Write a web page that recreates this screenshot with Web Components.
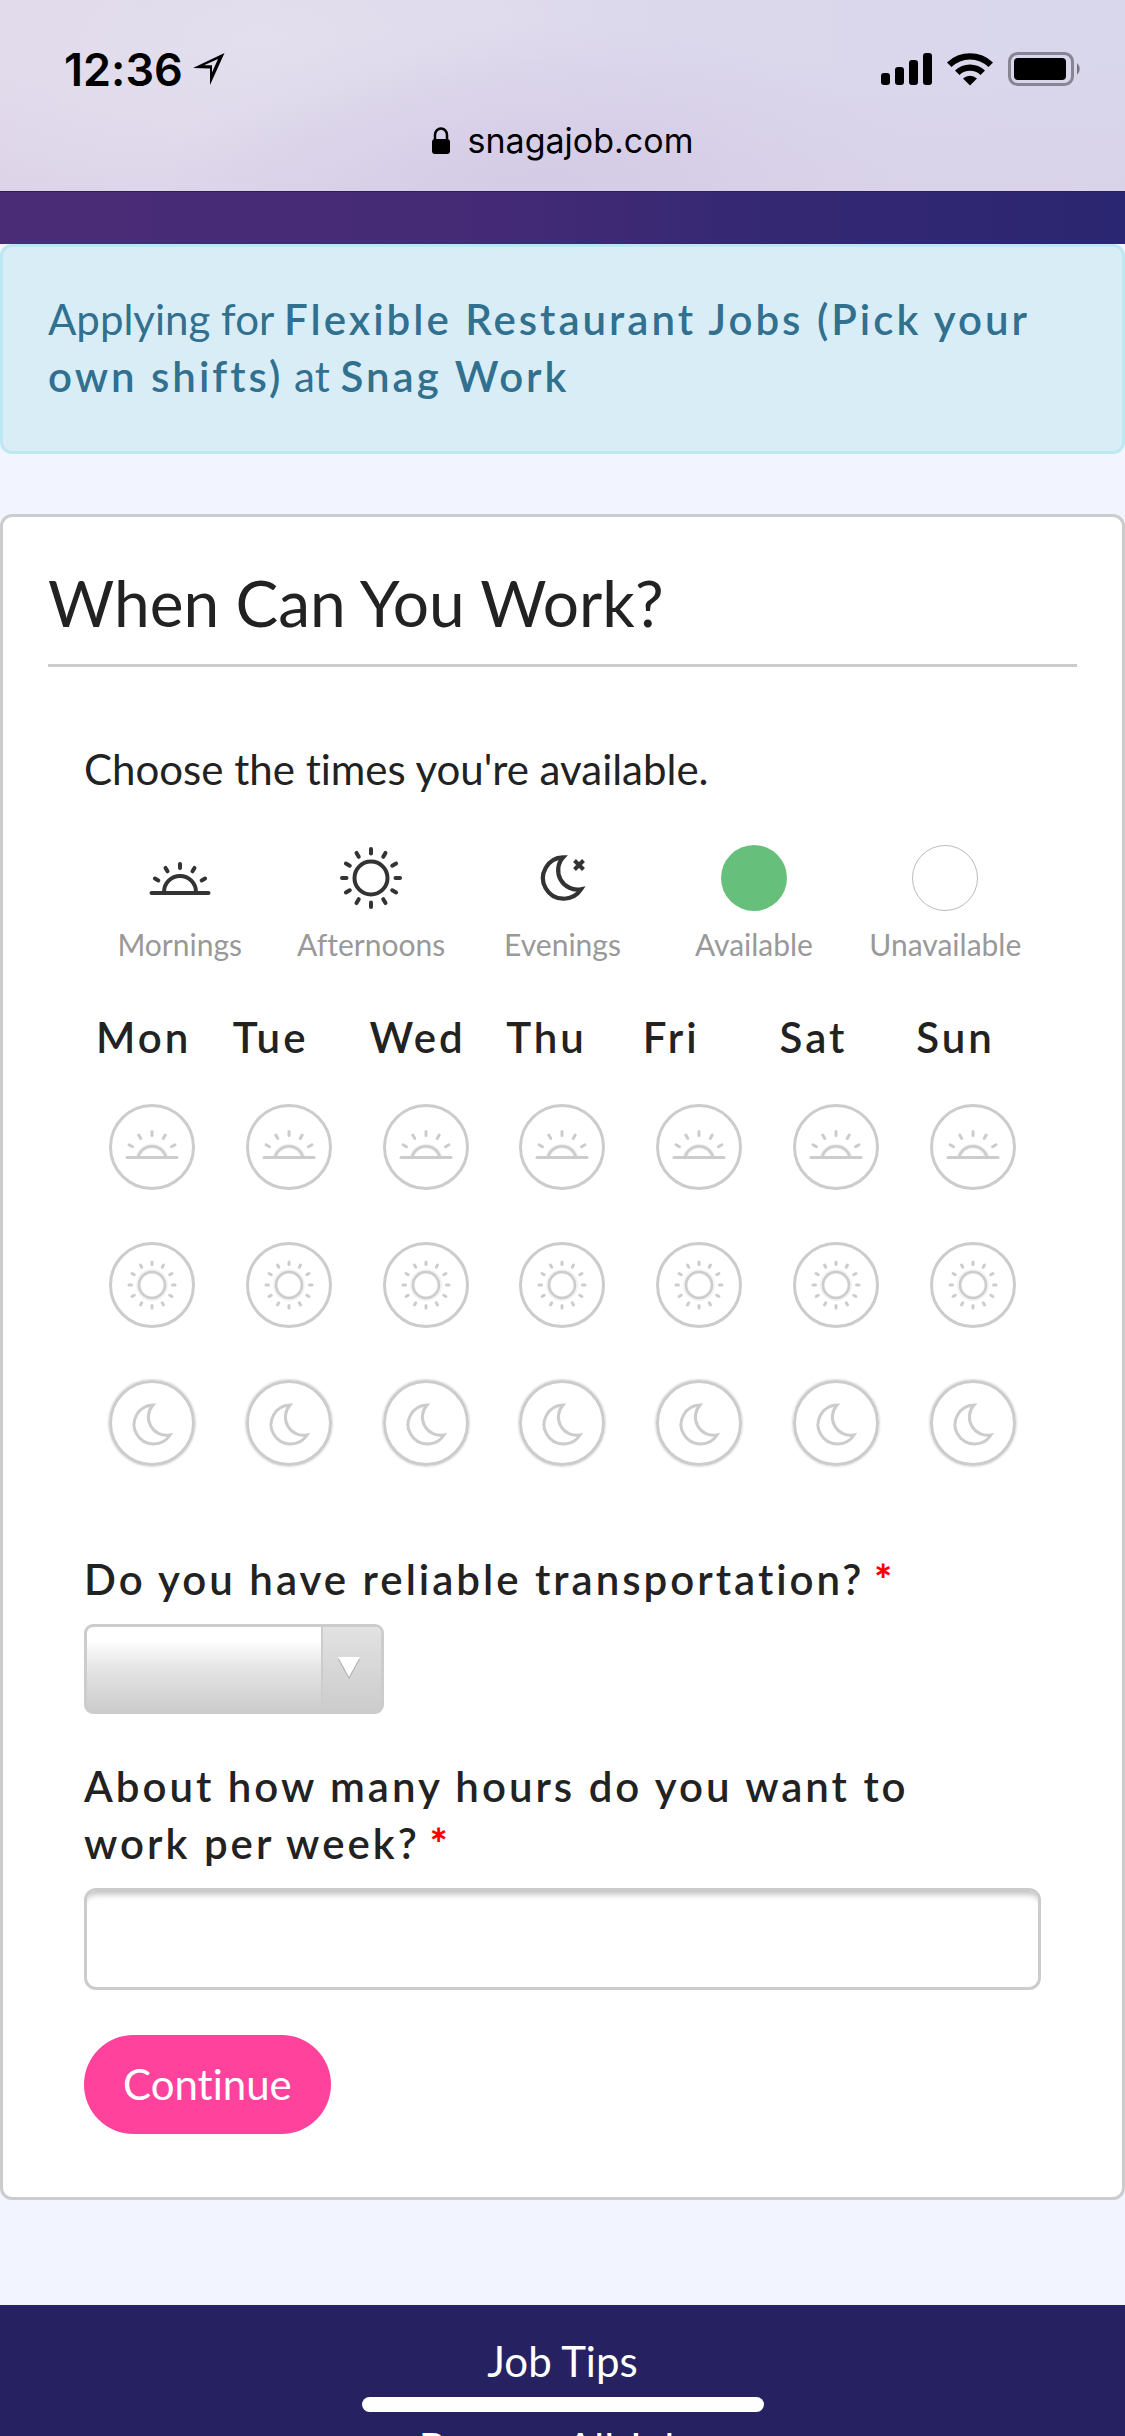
<!DOCTYPE html>
<html lang="en">
<head>
<meta charset="utf-8">
<meta name="viewport" content="width=device-width, initial-scale=1">
<title>When Can You Work?</title>
<style>
  body { margin: 0; background: #f2f4ff; color: #222; font: 400 42px/57px Lato, "Open Sans", sans-serif; font-variant-ligatures: none; }
</style>
</head>
<body>
<job-app>
  <status-bar slot="chrome" time="12:36" host="snagajob.com"></status-bar>
  <apply-banner>Applying for <b>Flexible Restaurant Jobs (Pick your own shifts)</b> at <b>Snag Work</b></apply-banner>
  <form-card heading="When Can You Work?">
    <p>Choose the times you're available.</p>
    <availability-legend></availability-legend>
    <availability-grid></availability-grid>
    <select-field label="Do you have reliable transportation?"></select-field>
    <text-field label="About how many hours do you want to work per week?"></text-field>
    <pill-button>Continue</pill-button>
  </form-card>
  <site-footer></site-footer>
</job-app>

<script>
const define = (name, render) => customElements.define(name, class extends HTMLElement {
  connectedCallback() {
    if (this.shadowRoot) return;
    this.attachShadow({ mode: 'open' }).innerHTML = render(this);
  }
});

const rays = (angles, from, to, cy = 0) => angles.map(a =>
  `<line x1="0" y1="${-from}" x2="0" y2="${-to}" transform="translate(0 ${cy}) rotate(${a})"/>`).join('');
const around = Array.from({ length: 12 }, (_, i) => i * 30);
const moonPath = 'M1 -18A19.5 19.5 0 1 0 18 12A18.2 18.2 0 0 1 1 -18Z';

/* Icons share a 90 unit box with the origin in its centre. */
const icons = {
  morning: `<path class="halo" d="M-14 10A14.5 14.5 0 0 1 14 10"/><path class="thin" d="M-14 10A14.5 14.5 0 0 1 14 10"/><line x1="-25" y1="10.5" x2="25" y2="10.5"/>${rays([-60, -30, 0, 30, 60], 22.5, 26.5, 11)}`,
  afternoon: `<circle class="halo" r="13.5"/><circle class="thin" r="13"/>${rays(around, 20.5, 23)}`,
  evening: `<path d="${moonPath}"/>`,
  morningKey: `<path d="M-16 14A16 16 0 0 1 16 14"/><line x1="-28.5" y1="15" x2="28.5" y2="15"/>${rays([-60, -30, 0, 30, 60], 25, 29, 15)}`,
  afternoonKey: `<circle r="16.5"/>${rays(around, 24.5, 29)}`,
  eveningKey: `<path transform="translate(-1 -1.5) scale(1.06)" d="${moonPath}"/><path d="M11.500 -17.500L20.500 -8.500M20.500 -17.500L11.500 -8.500"/>`
};

customElements.define('shift-icon', class extends HTMLElement {
  connectedCallback() {
    this.attachShadow({ mode: 'open' }).innerHTML = `<style>
      :host { display: block; line-height: 0; }
      svg { width: 90px; height: 90px; fill: none; stroke: currentColor; stroke-width: var(--stroke, 3); }
      line { stroke-linecap: round; }
      .thin { stroke-width: 2.5; }
      .halo { stroke-width: 5; opacity: .25; }
    </style><svg viewBox="-45 -45 90 90" aria-hidden="true">${icons[this.getAttribute('name')]}</svg>`;
  }
});

define('job-app', () => `<style>
  :host { display: flex; flex-direction: column; height: 100vh; overflow: hidden; }
  .brand { flex: none; height: 53px; box-sizing: border-box; border-top: 1px solid #2c2050; background: linear-gradient(90deg, #4a2b76, #442a76 45%, #362873 65%, #2b2671); }
  main { flex: 1; min-height: 0; overflow: hidden; display: flex; flex-direction: column; }
  .home { position: fixed; bottom: 24px; left: 50%; width: 402px; height: 15px; margin-left: -201px; border-radius: 8px; background: #fff; }
</style>
<slot name="chrome"></slot><div class="brand"></div><main><slot></slot></main><div class="home"></div>`);

define('status-bar', el => `<style>
  :host { display: flex; flex: none; flex-direction: column; gap: 16px; padding: 41px 44px 24px 64px; color: #000; font-family: Inter, Roboto, sans-serif;
    background: radial-gradient(ellipse 380px 170px at 48% 100%, #d4cbe6, #d4cbe600), radial-gradient(ellipse 420px 190px at 23% 20%, #e3dfee, #e3dfee00), linear-gradient(#dfdcee00 30%, #d9cfe688), linear-gradient(90deg, #e1d8ea, #dcd8ec 50%, #d9d7ec); }
  .row { display: flex; align-items: center; height: 56px; font-weight: 600; font-size: 45px; }
  .spacer { flex: 1; }
  .arrow { margin-left: 10px; }
  .row svg { display: block; }
  .url { display: flex; justify-content: center; align-items: center; gap: 18px; height: 54px; font-size: 34px; margin-left: -20px; }
</style>
<div class="row"><span>${el.getAttribute('time')}</span>
  <svg class="arrow" width="32" height="32" viewBox="0 0 32 32"><path fill-rule="evenodd" d="M0 15L31.500 0L17 32V15.500ZM11 12.200L25 6L19 19.500V12.200Z"/></svg>
  <span class="spacer"></span>
  <svg width="200" height="34" viewBox="0 0 200 34">
    <rect x="0" y="21" width="9" height="12" rx="3"/><rect x="14" y="15" width="9" height="18" rx="3"/><rect x="28" y="8" width="9" height="25" rx="3"/><rect x="42" y="1" width="9" height="32" rx="3"/>
    <path d="M66 10.500A33 33 0 0 1 112 10.500L107.500 15A26.500 26.500 0 0 0 70.500 15Z"/>
    <path d="M74 18.500A21.500 21.500 0 0 1 104 18.500L99.500 23A15.200 15.200 0 0 0 78.500 23Z"/>
    <path d="M82 26.500A10 10 0 0 1 96 26.500L89 33.500Z"/>
    <rect x="128.500" y="1.500" width="63" height="31" rx="8" fill="none" stroke="#888593" stroke-width="3"/>
    <rect x="133" y="6" width="52" height="22" rx="4"/><path d="M196 11A8 8 0 0 1 196 23Z" fill="#777482"/>
  </svg>
</div>
<div class="url"><svg width="18" height="27" viewBox="0 0 18 27"><rect y="12" width="18" height="15" rx="3"/><path d="M3 14V8A6 6.500 0 0 1 15 8V14" fill="none" stroke="#000" stroke-width="2.500"/></svg><span>${el.getAttribute('host')}</span></div>`);

define('apply-banner', () => `<style>
  :host { display: block; flex: none; padding: 44px 45px 46px; border: 3px solid #bce8f1; border-radius: 12px; background: #d9edf7; color: #31708f; }
  ::slotted(b) { font-weight: 600; letter-spacing: 3px; }
</style><slot></slot>`);

define('form-card', el => `<style>
  :host { display: block; flex: none; margin-top: 60px; padding: 44px 45px 63px; border: 3px solid #ccc; border-radius: 12px; background: #fff; }
  h1 { margin: 0 0 74px; padding-bottom: 19px; border-bottom: 3px solid #ccc; font-weight: 400; font-size: 64px; line-height: 84px; }
  .body { padding: 0 36px; }
  ::slotted(p) { margin: 0; }
</style><h1>${el.getAttribute('heading')}</h1><div class="body"><slot></slot></div>`);

define('availability-legend', () => {
  const items = [['morningKey', 'Mornings'], ['afternoonKey', 'Afternoons'], ['eveningKey', 'Evenings'], ['on', 'Available'], ['off', 'Unavailable']];
  return `<style>
  :host { display: flex; margin-top: 35px; --stroke: 4; }
  div { flex: 1 1 0; min-width: 0; display: flex; flex-direction: column; align-items: center; color: #333; }
  i { box-sizing: border-box; width: 66px; height: 66px; margin: 12px 0; border-radius: 50%; }
  .on { background: #66c07b; }
  .off { border: 1px solid #bbb; }
  span { color: #999; font-size: 30px; line-height: 42px; }
</style>` + items.map(([k, t]) => `<div>${icons[k] ? `<shift-icon name="${k}"></shift-icon>` : `<i class="${k}"></i>`}<span>${t}</span></div>`).join('');
});

define('availability-grid', () => {
  const days = ['Mon', 'Tue', 'Wed', 'Thu', 'Fri', 'Sat', 'Sun'];
  return `<style>
  :host { display: grid; grid-template-columns: repeat(7, minmax(0, 1fr)); grid-template-rows: 69px; grid-auto-rows: 138px; margin-top: 44px; }
  b { padding-left: 12px; font-weight: 600; letter-spacing: 3px; }
  label { display: grid; place-items: center; color: #ccc; }
  label > * { grid-area: 1 / 1; }
  input { appearance: none; box-sizing: border-box; width: 86px; height: 86px; margin: 0; border: 3px solid #ccc; border-radius: 50%; }
  input:checked { background: #66c07b; }
  .evening input { box-shadow: 0 0 2px 1px #ddd; }
  shift-icon { pointer-events: none; }
</style>` + days.map(d => `<b>${d}</b>`).join('') +
  ['morning', 'afternoon', 'evening'].map(s => days.map(d =>
    `<label class="${s}"><input type="checkbox" aria-label="${d} ${s}"><shift-icon name="${s}"></shift-icon></label>`).join('')).join('');
});

const fieldStyle = `
  label { display: block; margin-bottom: 16px; padding-right: 36px; font-weight: 600; letter-spacing: 3px; }
  em { margin-left: 10px; color: #f00; font-style: normal; font-weight: 900; letter-spacing: 0; }
  input, select { appearance: none; display: block; box-sizing: border-box; margin: 0; border: 3px solid #ccc; border-radius: 12px; font: inherit; color: inherit; }`;

define('select-field', el => `<style>
  :host { display: block; margin-top: 59px; } ${fieldStyle}
  .box { display: inline-grid; vertical-align: top; }
  .box > * { grid-area: 1 / 1; }
  select { width: 300px; height: 90px; padding: 0 80px 0 18px; border-radius: 9px; background: linear-gradient(#fff 15%, #e4e4e4 50%, #ccc); }
  .arrow { justify-self: end; display: flex; align-items: center; justify-content: center; box-sizing: border-box; width: 60px; margin: 3px; padding: 0 6px 2px 0; border-left: 2px solid #ccc; border-radius: 0 6px 6px 0; background: linear-gradient(#e2e2e2, #ccc); pointer-events: none; }
</style><label for="f">${el.getAttribute('label')}<em>*</em></label>
<div class="box"><select id="f"><option></option></select>
<span class="arrow"><svg width="22" height="22" viewBox="0 0 22 22"><path d="M0 2H22L11 22Z" fill="#aaa"/><path d="M0 0H22L11 20Z" fill="#fff"/></svg></span></div>`);

define('text-field', el => `<style>
  :host { display: block; margin-top: 44px; } ${fieldStyle}
  input { width: 100%; height: 102px; padding: 0 18px; background: #fff; box-shadow: inset 0 9px 6px -6px #bbb; }
</style><label for="f">${el.getAttribute('label')}<em>*</em></label><input id="f" type="text">`);

define('pill-button', () => `<style>
  :host { display: block; margin-top: 45px; }
  button { display: block; height: 99px; margin: 0; padding: 0 39px; border: 0; border-radius: 50px; background: #ff439d; color: #fff; font: inherit; }
</style><button type="button"><slot></slot></button>`);

define('site-footer', () => `<style>
  :host { display: flex; flex: none; flex-direction: column; align-items: center; gap: 30px; margin-top: 105px; padding: 28px 45px; background: #262262; }
  a { color: #fff; text-decoration: none; }
</style><a href="#tips">Job Tips</a><a href="#jobs">Browse All Jobs</a>`);
</script>
</body>
</html>
